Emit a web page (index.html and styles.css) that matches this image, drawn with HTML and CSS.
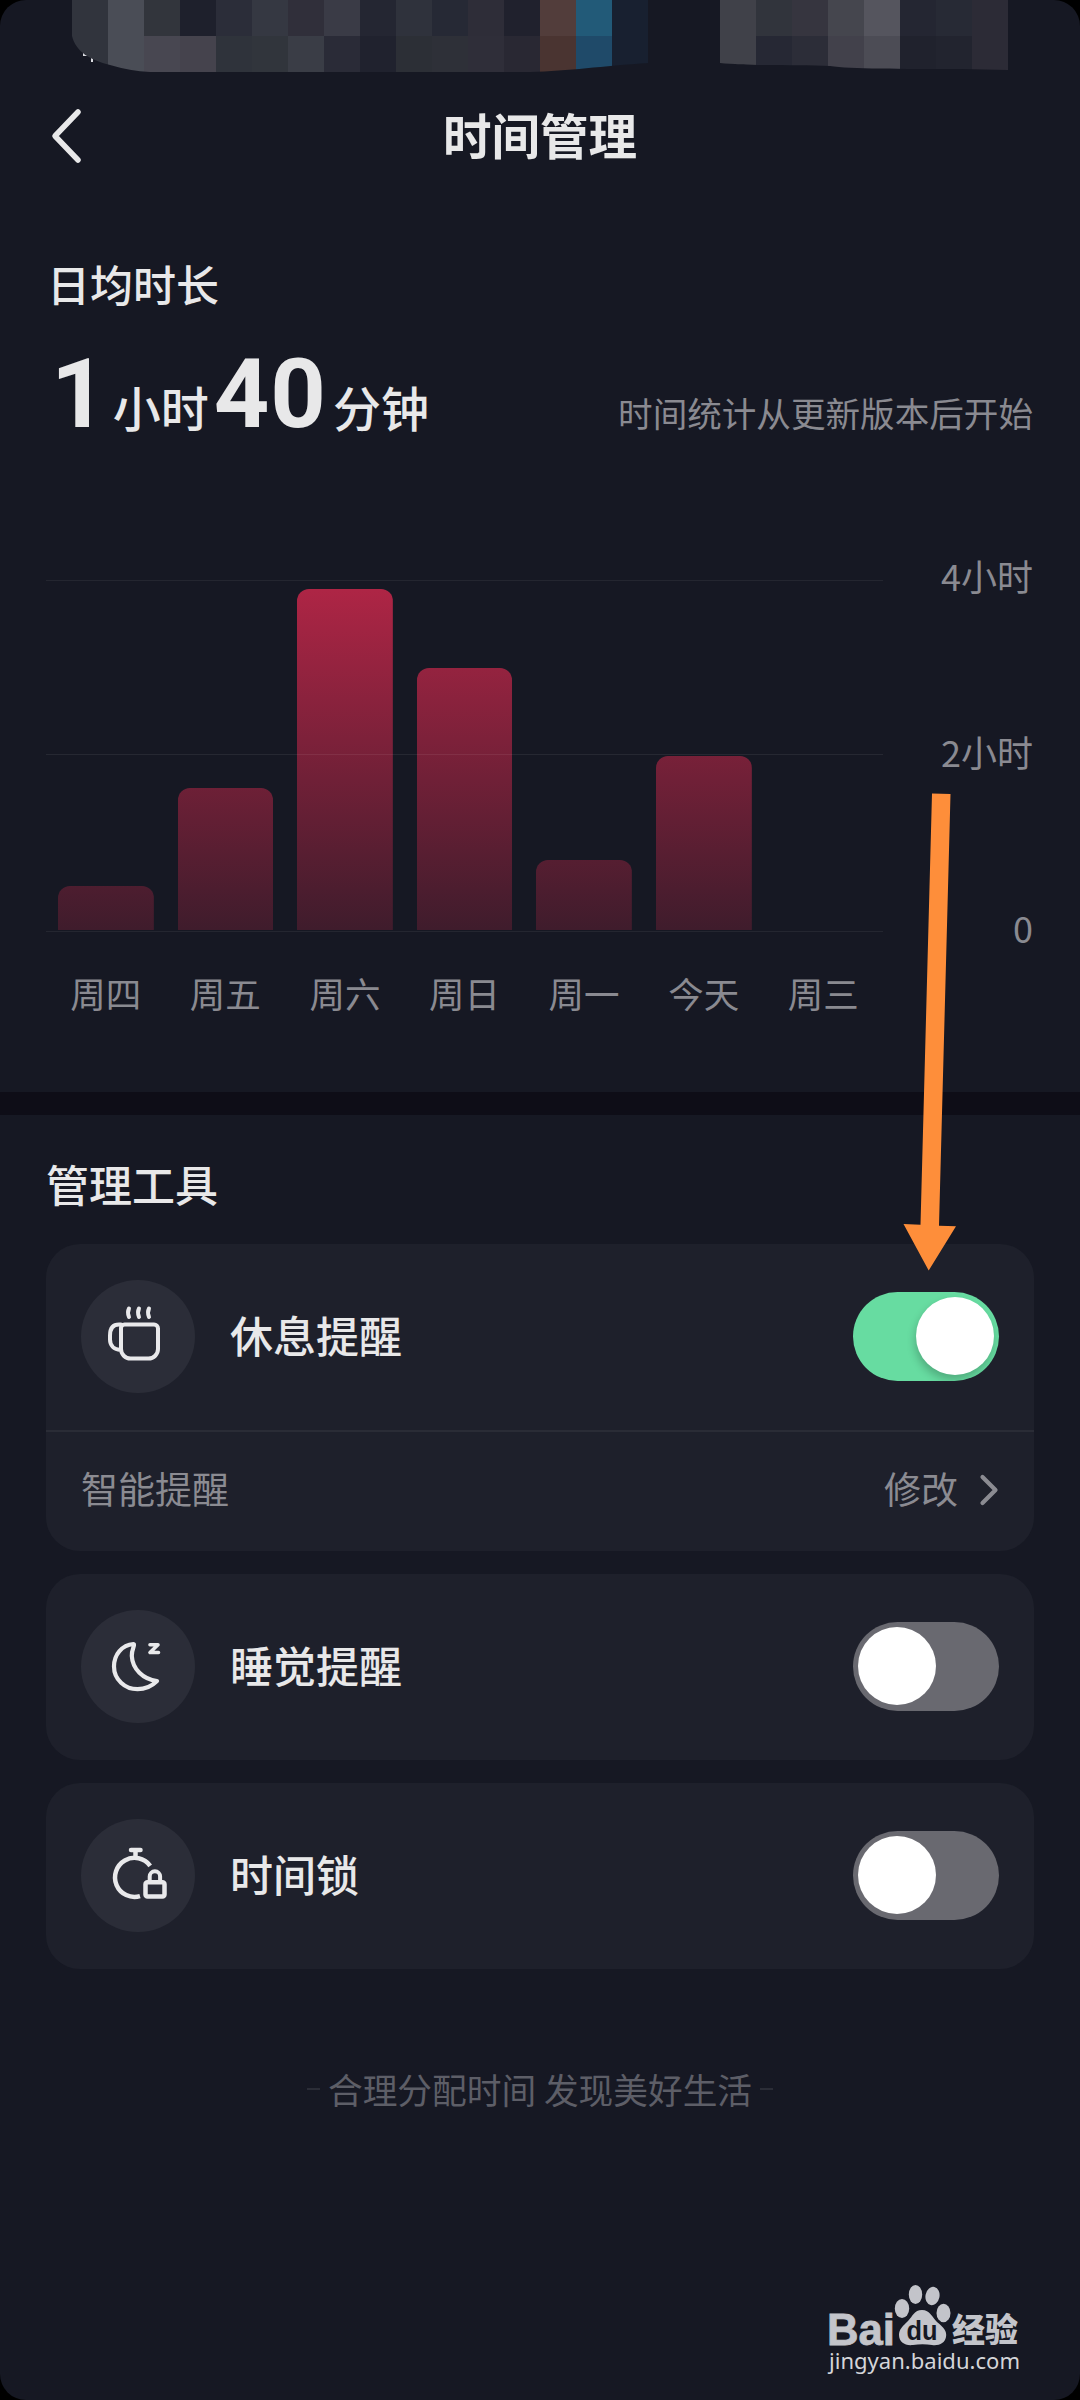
FILE: index.html
```html
<!DOCTYPE html>
<html lang="zh-CN">
<head>
<meta charset="utf-8">
<title>时间管理</title>
<link rel="stylesheet" href="styles.css">
</head>
<body>
<main class="screen">
  <header class="statusbar">
    <svg class="mosaic" width="1080" height="80" viewBox="0 0 1080 80" shape-rendering="crispEdges">
      <defs>
        <clipPath id="smear"><path d="M72 0V36C76 52 90 60 110 65Q130 71 150 72H530C570 71 600 66 650 63H720C750 66 800 65 830 66C850 69 900 69 960 69L1008 70V0Z"/></clipPath>
      </defs>
      <path d="M84 50v5h6M92 55v7M106 61v2" fill="none" stroke="#dcdde2" stroke-width="1.6"/>
      <g clip-path="url(#smear)">
        <path fill="#31343d" d="M72 0h36v72H72z"/><path fill="#4a4d56" d="M108 0h36v72h-36z"/>
        <path fill="#32353c" d="M144 0h36v36h-36z"/><path fill="#1e202c" d="M180 0h36v36h-36z"/>
        <path fill="#2b2d39" d="M216 0h36v36h-36z"/><path fill="#353842" d="M252 0h36v36h-36z"/>
        <path fill="#302f3a" d="M288 0h36v36h-36z"/><path fill="#3a3b46" d="M324 0h36v36h-36z"/>
        <path fill="#242632" d="M360 0h36v36h-36z"/><path fill="#2f323c" d="M396 0h36v36h-36z"/>
        <path fill="#262935" d="M432 0h36v36h-36z"/><path fill="#2e2d38" d="M468 0h36v36h-36z"/>
        <path fill="#20212d" d="M504 0h36v36h-36z"/><path fill="#523d3b" d="M540 0h36v36h-36z"/>
        <path fill="#225a78" d="M576 0h36v36h-36z"/><path fill="#182030" d="M612 0h36v72h-36z"/>
        <path fill="#404149" d="M720 0h36v72h-36z"/><path fill="#31343c" d="M756 0h36v36h-36z"/>
        <path fill="#36353f" d="M792 0h36v36h-36z"/><path fill="#45464e" d="M828 0h36v36h-36z"/>
        <path fill="#55555e" d="M864 0h36v36h-36z"/><path fill="#242632" d="M900 0h36v36h-36z"/>
        <path fill="#272a35" d="M936 0h36v36h-36z"/><path fill="#2c2b36" d="M972 0h36v72h-36z"/>
        <path fill="#484751" d="M144 36h36v36h-36z"/><path fill="#45434d" d="M180 36h36v36h-36z"/>
        <path fill="#2f333b" d="M216 36h36v36h-36z"/><path fill="#31353c" d="M252 36h36v36h-36z"/>
        <path fill="#3a3d46" d="M288 36h36v36h-36z"/><path fill="#2a2b37" d="M324 36h36v36h-36z"/>
        <path fill="#20222e" d="M360 36h36v36h-36z"/><path fill="#2c2f36" d="M396 36h36v36h-36z"/>
        <path fill="#2e3038" d="M432 36h36v36h-36z"/><path fill="#2f2e39" d="M468 36h36v36h-36z"/>
        <path fill="#292833" d="M504 36h36v36h-36z"/><path fill="#4a3431" d="M540 36h36v36h-36z"/>
        <path fill="#1f4a69" d="M576 36h36v36h-36z"/><path fill="#262834" d="M756 36h36v36h-36z"/>
        <path fill="#2c2d38" d="M792 36h36v36h-36z"/><path fill="#42414b" d="M828 36h36v36h-36z"/>
        <path fill="#4c4c55" d="M864 36h36v36h-36z"/><path fill="#20222d" d="M900 36h36v36h-36z"/>
        <path fill="#22242f" d="M936 36h36v36h-36z"/>
      </g>
    </svg>
  </header>

  <nav class="navbar">
    <svg class="back" width="36" height="60" viewBox="0 0 36 60"><path d="M30 6 7 30 30 54" fill="none" stroke="#e8e8e9" stroke-width="5.500" stroke-linecap="round" stroke-linejoin="round"/></svg>
    <h1 class="title">时间管理</h1>
  </nav>

  <section class="stats">
    <h2 class="label">日均时长</h2>
    <div class="summary">
      <p class="total"><b class="num one">1</b><span class="unit">小时</span><b class="num forty">40</b><span class="unit">分钟</span></p>
      <p class="note">时间统计从更新版本后开始</p>
    </div>
    <div class="chart">
      <div class="plot">
        <div class="bars">
          <div class="col"><i class="bar" style="height:44px"></i></div>
          <div class="col"><i class="bar" style="height:142px"></i></div>
          <div class="col"><i class="bar" style="height:341px"></i></div>
          <div class="col"><i class="bar" style="height:262px"></i></div>
          <div class="col"><i class="bar" style="height:70px"></i></div>
          <div class="col"><i class="bar" style="height:174px"></i></div>
          <div class="col"></div>
        </div>
        <div class="days"><span>周四</span><span>周五</span><span>周六</span><span>周日</span><span>周一</span><span>今天</span><span>周三</span></div>
      </div>
      <div class="scale"><span>4小时</span><span>2小时</span><span>0</span></div>
    </div>
  </section>

  <section class="tools">
    <h2 class="heading">管理工具</h2>
    <div class="card">
      <div class="row">
        <span class="badge"><svg width="114" height="112" viewBox="81 1280 114 112" fill="none" stroke="#e9e9eb" stroke-width="4" stroke-linecap="round" stroke-linejoin="round"><path d="M124.500 1324.500H154a4 4 0 0 1 4 4V1349a9.500 9.500 0 0 1-9.500 9.500H130.500a9.500 9.500 0 0 1-9.500-9.500V1328a3.500 3.500 0 0 1 3.500-3.500ZM121 1324.500h-2c-6 0-9 4-9 11v4c0 6 4 10 10.500 10.500M129 1308.500q-2 4 0 8.500M139 1308.500q-2 4 0 8.500M149 1308.500q-2 4 0 8.500"/></svg></span>
        <span class="name">休息提醒</span>
        <span class="toggle on"><i class="knob"></i></span>
      </div>
      <div class="detail">
        <span>智能提醒</span>
        <span class="edit">修改<svg class="chevron" width="20" height="34" viewBox="0 0 20 34"><path d="M3.500 4 16.500 17 3.500 30" fill="none" stroke="#8b8b92" stroke-width="4.200" stroke-linecap="round" stroke-linejoin="round"/></svg></span>
      </div>
    </div>
    <div class="card">
      <div class="row">
        <span class="badge"><svg width="114" height="112" viewBox="81 1610 114 112" fill="none" stroke="#e9e9eb" stroke-width="4.200" stroke-linecap="round" stroke-linejoin="round"><path d="M133.500 1644C122 1645 114 1654.500 114 1666.500C114 1679.500 125 1689.200 137.500 1689.200C146 1689.200 152 1686 157 1681C143 1679.500 132.500 1669 131.800 1656C131.500 1650 134.500 1646.500 134 1644.500Z"/><path d="M150 1644.800h8L150 1652.500h8.500" stroke-width="3.600"/></svg></span>
        <span class="name">睡觉提醒</span>
        <span class="toggle"><i class="knob"></i></span>
      </div>
    </div>
    <div class="card">
      <div class="row">
        <span class="badge"><svg width="114" height="114" viewBox="81 1818 114 114" fill="none" stroke="#e9e9eb" stroke-width="4.500"><path d="M131 1850h9.500" stroke-linecap="round"/><path d="M135.500 1850v7M150.200 1865.800A19.500 19.500 0 1 0 140 1896.100"/><rect x="145.500" y="1882.300" width="19" height="14.200" rx="2"/><path d="M149.700 1882v-5.500a5.200 5.200 0 0 1 10.400 0v5.500" stroke-width="4"/></svg></span>
        <span class="name">时间锁</span>
        <span class="toggle"><i class="knob"></i></span>
      </div>
    </div>
  </section>

  <footer class="slogan"><i class="dash"></i><span>合理分配时间 发现美好生活</span><i class="dash"></i></footer>

  <svg class="arrow" width="60" height="482" viewBox="900 791 60 482"><path d="M932 793.500 950.500 794 939 1225.800 956 1226.200 928.700 1270.500 903.500 1224 920.500 1224.700Z" fill="#fe8e3a"/></svg>

  <svg class="watermark" width="200" height="100" viewBox="824 2280 200 100">
    <g fill="#c3c4ca">
      <text class="wm-logo" x="827" y="2345" textLength="68" lengthAdjust="spacingAndGlyphs">Bai</text>
      <ellipse cx="902" cy="2308.500" rx="7.200" ry="9.500"/>
      <ellipse cx="915.500" cy="2294.500" rx="6.700" ry="9.500"/>
      <ellipse cx="932.500" cy="2296" rx="7" ry="9.200" transform="rotate(12 932.500 2296)"/>
      <ellipse cx="943.500" cy="2313" rx="7" ry="9.200"/>
      <path d="M922 2310c8 0 10 7 15 12c7 6 10 9 9 15c-1 6-7 9-14 8c-6-1-13-1-19 0c-8 1-14-3-14-10c0-6 4-9 9-14c5-5 6-11 14-11Z"/>
      <text class="wm-cn" x="952" y="2342" textLength="66" lengthAdjust="spacingAndGlyphs">经验</text>
    </g>
    <text class="wm-du" x="906.500" y="2340" textLength="31" lengthAdjust="spacingAndGlyphs">du</text>
    <text class="wm-url" x="829" y="2369" textLength="191" lengthAdjust="spacingAndGlyphs">jingyan.baidu.com</text>
  </svg>
</main>
</body>
</html>
```
FILE: styles.css
```css
* { box-sizing: border-box; margin: 0; padding: 0; }
html { background: #000; }
body {
  width: 1080px;
  height: 2400px;
  overflow: hidden;
  background: #000;
  font-family: "Noto Sans CJK SC", sans-serif;
  color: #e8e8e9;
}
h1, h2 { font-weight: 500; }
.screen {
  position: relative;
  display: flex;
  flex-direction: column;
  height: 2400px;
  background: #161823;
  border-radius: 26px;
  overflow: hidden;
}
.statusbar { height: 80px; }
.mosaic { display: block; }
.navbar {
  display: grid;
  grid-template-columns: 1fr auto 1fr;
  align-items: center;
  height: 112px;
  padding: 0 46px;
}
.back { display: block; margin-left: 2px; }
.title { font-size: 48.500px; line-height: 72px; font-weight: 700; margin-top: -4px; }

.stats { display: flex; flex-direction: column; height: 900px; padding: 0 46px; }
.label { margin: 61px 0 0 1px; font-size: 43px; line-height: 60px; }
.summary { display: flex; justify-content: space-between; align-items: baseline; height: 120px; margin-top: 24px; line-height: 110px; }
.total { display: flex; align-items: baseline; }
.num { font-family: Roboto, sans-serif; font-size: 97px; font-weight: 700; line-height: 114px; }
.one { margin-left: 5px; }
.forty { margin-left: 5px; letter-spacing: 1px; }
.unit { margin-left: 6px; font-size: 48px; font-weight: 500; }
.note { margin-right: 1px; font-size: 34.600px; color: #8a8a91; }
.chart { display: flex; justify-content: space-between; margin-top: 123px; font-size: 35.500px; color: #8a8a91; }
.plot { width: 837px; }
.bars {
  display: flex;
  align-items: flex-end;
  position: relative;
  height: 352px;
  padding-bottom: 1px;
  border-top: 1px solid #242630;
  border-bottom: 1px solid #242630;
}
.bars::after {
  content: "";
  position: absolute;
  left: 0;
  right: 0;
  top: 173px;
  height: 1px;
  background: rgba(255, 255, 255, .07);
}
.col { flex: 1; display: flex; justify-content: center; align-items: flex-end; }
.bar {
  width: 80%;
  border-radius: 12px 12px 0 0;
  background: linear-gradient(#ae2545, #3f1c2c) bottom / 100% 341px no-repeat;
}
.days { display: flex; margin-top: 35px; line-height: 52px; }
.days span { flex: 1; text-align: center; }
.scale { display: flex; flex-direction: column; justify-content: space-between; height: 404px; margin: -31px 1px 0 0; font-size: 36px; line-height: 52px; text-align: right; }

.tools {
  display: flex;
  flex-direction: column;
  gap: 23px;
  padding: 38px 46px 0;
  border-top: 23px solid #0e0d17;
}
.heading { font-size: 43px; line-height: 60px; margin: 0 0 8px; }
.card { border-radius: 34px; background: #1e202b; }
.row { display: flex; align-items: center; height: 186px; padding: 0 35px 2px; }
.badge {
  display: flex;
  width: 114px;
  height: 113px;
  align-items: center;
  justify-content: center;
  border-radius: 50%;
  background: #2b2d38;
}
.name { flex: 1; margin-left: 35px; padding-bottom: 5px; font-size: 43px; font-weight: 500; }
.toggle { display: flex; align-items: center; width: 146px; height: 89px; padding: 0 5px; border-radius: 45px; background: #696970; overflow: hidden; }
.toggle.on { justify-content: flex-end; background: #67dca1; }
.knob { width: 78px; height: 78px; border-radius: 50%; background: #fff; }
.on .knob { box-shadow: -1px 5px 8px rgba(0, 0, 0, .22); }
.detail {
  display: flex;
  justify-content: space-between;
  align-items: center;
  height: 121px;
  padding: 0 35px 7px;
  border-top: 2px solid #2a2c36;
  font-size: 37px;
  color: #8b8b92;
}
.edit { display: flex; align-items: center; gap: 21px; }
.chevron { margin-top: 4px; }

.slogan {
  display: flex;
  justify-content: center;
  align-items: center;
  gap: 8px;
  margin-top: 92px;
  font-size: 34.700px;
  line-height: 56px;
  color: #5d5e67;
}
.dash { width: 13px; height: 2px; background: #2b2d37; }

.arrow { position: absolute; left: 900px; top: 791px; }
.watermark { position: absolute; left: 824px; top: 2280px; }
.wm-logo { font: 700 44px "Liberation Sans", sans-serif; stroke: #c3c4ca; stroke-width: .8px; }
.wm-cn { font: 900 33px "Noto Sans CJK SC", sans-serif; }
.wm-du { font: 700 27px "Liberation Sans", sans-serif; fill: #161823; }
.wm-url { font: 400 22px "Noto Sans", sans-serif; fill: #d4d5d9; }
```
